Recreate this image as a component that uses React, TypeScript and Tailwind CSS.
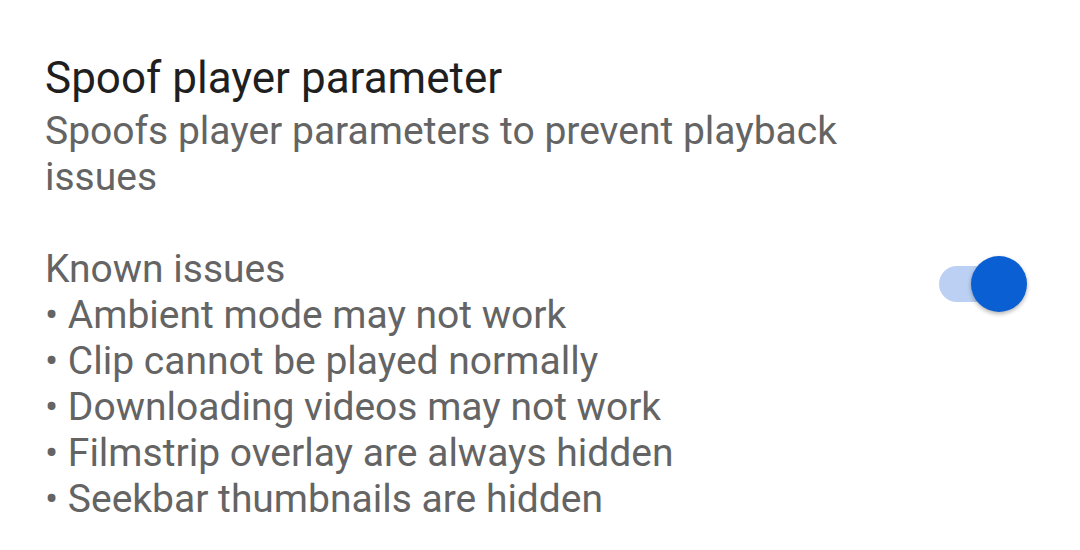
export default function App() {
  const summary =
    "Spoofs player parameters to prevent playback issues\n\nKnown issues\n• Ambient mode may not work\n• Clip cannot be played normally\n• Downloading videos may not work\n• Filmstrip overlay are always hidden\n• Seekbar thumbnails are hidden";

  return (
    <div
      className="w-[1080px] h-[550px] bg-white pt-[49px] pl-[45px] pr-[53px]"
      style={{ fontFamily: "Roboto, 'Noto Sans', sans-serif" }}
    >
      <div className="flex items-center">
        <div className="flex-1">
          <div className="text-[44px] leading-[59px] text-[#1f1f1f]">
            Spoof player parameter
          </div>
          <div className="w-[840px] text-[39px] leading-[46px] text-[#646464] whitespace-pre-line">
            {summary}
          </div>
        </div>

        {/* toggle switch, on */}
        <div className="relative w-[88px] h-[56px] mb-[4px] flex items-center">
          <div className="w-[80px] h-[36px] rounded-full bg-[#bcd0f3]" />
          <div className="absolute right-0 top-0 w-[56px] h-[56px] rounded-full bg-[#0a5fd2] shadow-[0_2px_4px_rgba(0,0,0,0.3)]" />
        </div>
      </div>
    </div>
  );
}
